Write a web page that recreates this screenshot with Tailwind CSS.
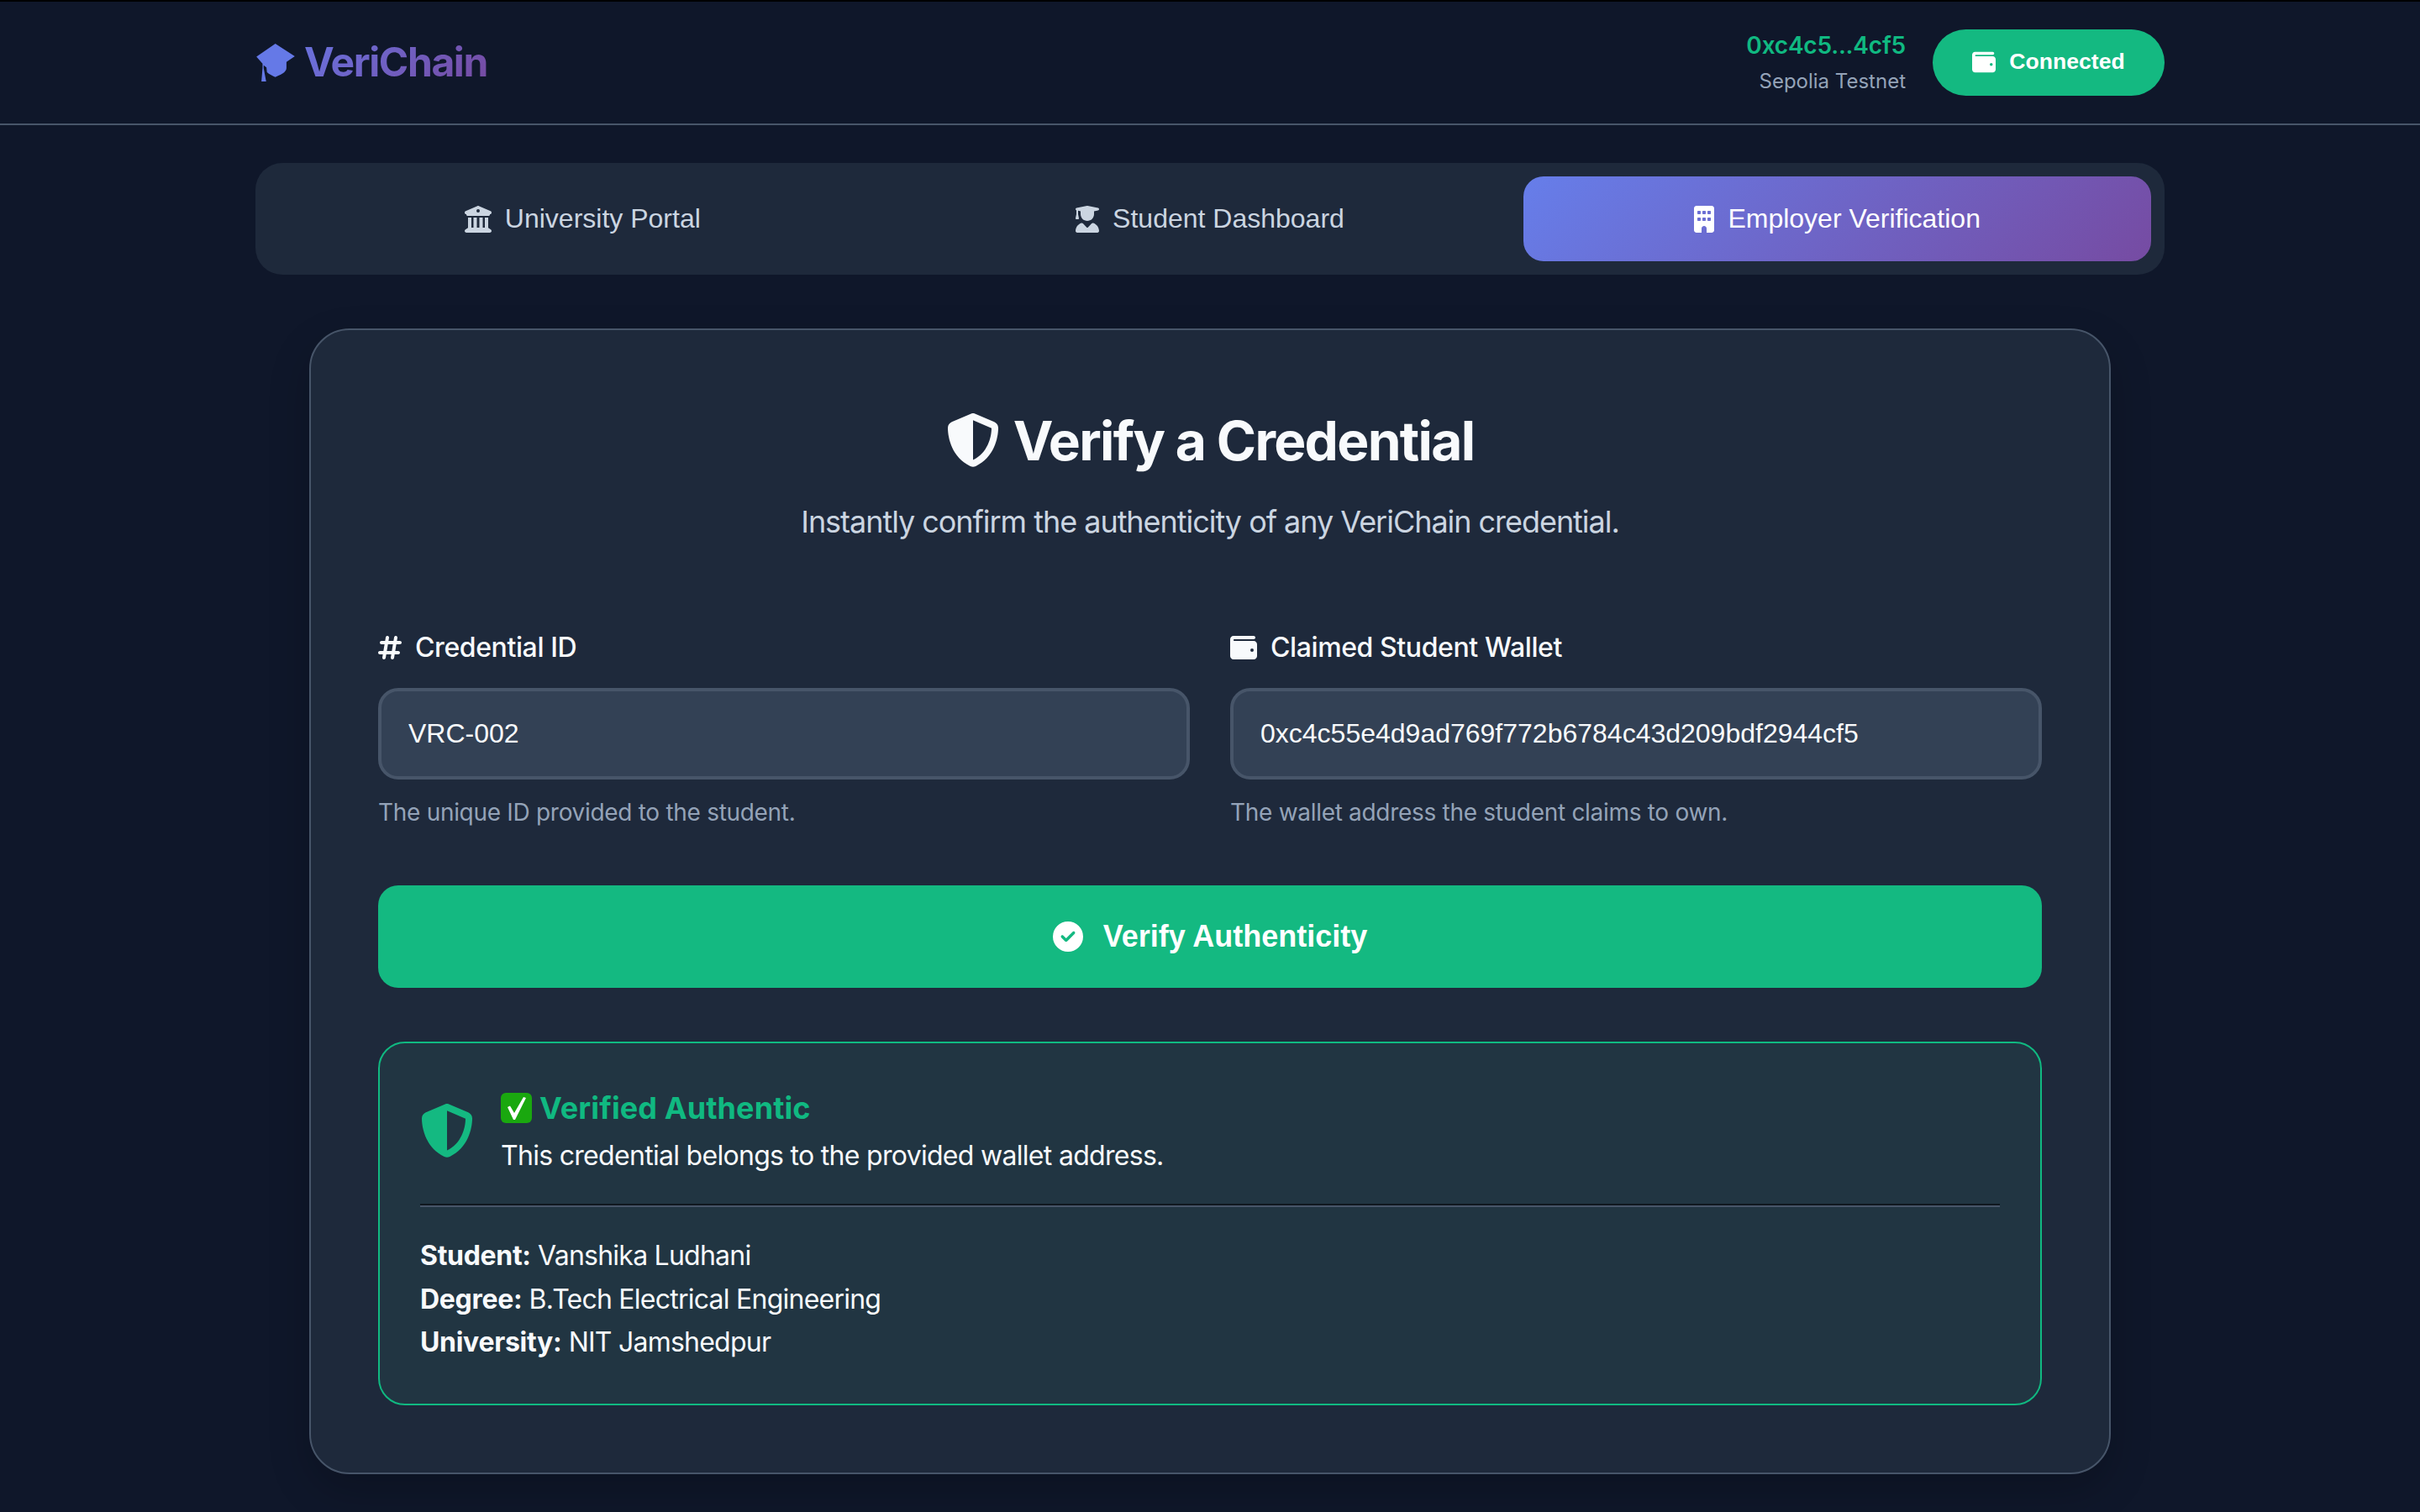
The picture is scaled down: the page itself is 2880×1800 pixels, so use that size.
<!doctype html>
<html lang="en">
  <head>
    <meta charset="utf-8" />
    <script src="https://cdn.jsdelivr.net/npm/@tailwindcss/browser@4"></script>
    <title>VeriChain</title>
  </head>
  <body class="min-h-[1800px] bg-[#0f172a] font-['Inter',sans-serif] text-[#f8fafc]">
    <header class="h-[149px] border-t-2 border-b-2 border-t-black border-b-[#475569] bg-[#0f172a]">
      <div class="mx-auto flex h-full w-[2272px] items-center justify-between pb-[1px]">
        <div class="flex items-center gap-[11px] pl-[1px]">
          <svg class="h-[45px] w-[46px]" viewBox="0 0 138 136" fill="#6579e7">
            <path d="M68 0 138 45 108 66V88C108 104 84 114 68 120 60 117 45 110 38 103L36 85 26 78V88L35 136H18L22 88V72L0 47Z" />
          </svg>
          <span class="bg-[linear-gradient(135deg,#6a72de,#764ba2)] bg-clip-text text-[48px] leading-none font-bold tracking-[-1.4px] text-transparent">VeriChain</span>
        </div>
        <div class="flex items-center gap-[32px]">
          <div class="text-right">
            <div class="text-[28px] leading-[40px] font-semibold tracking-[-0.2px] text-[#10b981]">0xc4c5...4cf5</div>
            <div class="mt-[5px] text-[24px] leading-[36px] text-[#94a3b8]">Sepolia Testnet</div>
          </div>
          <button class="flex h-[79px] w-[276px] items-center justify-center gap-[16px] rounded-full bg-[#14b981] font-['Liberation_Sans',sans-serif] text-[26.6px] font-bold text-white">
            <svg class="h-[28px] w-[28px]" viewBox="0 0 512 512" fill="currentColor"><path d="M64 32C28.7 32 0 60.7 0 96V416c0 35.3 28.7 64 64 64H448c35.3 0 64-28.7 64-64V192c0-35.3-28.7-64-64-64H80c-8.8 0-16-7.2-16-16s7.2-16 16-16H448c17.7 0 32-14.3 32-32s-14.3-32-32-32H64zM416 272a32 32 0 1 1 0 64 32 32 0 1 1 0-64z"/></svg>
            Connected
          </button>
        </div>
      </div>
    </header>

    <main class="mx-auto w-[2272px]">
      <nav class="mt-[45px] grid h-[133px] grid-cols-3 rounded-[32px] bg-[#1e293b] p-[16px] font-['Liberation_Sans',sans-serif] text-[32px]">
        <a class="flex items-center justify-center gap-[16px] rounded-[24px] text-[#cbd5e1]">
          <svg class="h-[32px] w-[32px]" viewBox="0 0 512 512" fill="currentColor"><path d="M243.4 2.6l-224 96c-14 6-21.8 21-18.7 35.8S16.8 160 32 160v8c0 13.3 10.7 24 24 24H456c13.3 0 24-10.7 24-24v-8c15.2 0 28.3-10.7 31.3-25.6s-4.8-29.9-18.7-35.8l-224-96c-8-3.4-17.2-3.4-25.2 0zM128 224H64V420.3c-.6 .3-1.2 .7-1.8 1.1l-48 32c-11.7 7.8-17 22.4-12.9 35.9S17.9 512 32 512H480c14.1 0 26.5-9.2 30.6-22.7s-1.1-28.1-12.9-35.9l-48-32c-.6-.4-1.2-.7-1.8-1.1V224H384V416H344V224H280V416H232V224H168V416H128V224zM256 64a32 32 0 1 1 0 64 32 32 0 1 1 0-64z"/></svg>
          <span class="mb-[2px]">University Portal</span>
        </a>
        <a class="flex items-center justify-center gap-[16px] rounded-[24px] text-[#cbd5e1]">
          <svg class="h-[32px] w-[28px]" viewBox="0 0 448 512" fill="currentColor"><path d="M219.3 .5c3.1-.6 6.3-.6 9.4 0l200 40C439.9 42.7 448 52.6 448 64s-8.1 21.3-19.3 23.5L352 102.9V160c0 70.7-57.3 128-128 128s-128-57.3-128-128V102.9L48 93.3v65.1l15.7 78.4c.9 4.7-.3 9.6-3.3 13.3s-7.6 5.9-12.4 5.9H16c-4.8 0-9.3-2.1-12.4-5.9s-4.3-8.6-3.3-13.3L16 158.4V86.6C6.5 83.3 0 74.3 0 64C0 52.6 8.1 42.7 19.3 40.5l200-40zM111.9 327.7c10.5-3.4 21.8 .4 29.4 8.5l71 75.5c6.3 6.7 17 6.7 23.3 0l71-75.5c7.6-8.1 18.9-11.9 29.4-8.5C401 348.6 448 409.4 448 481.3c0 17-13.8 30.7-30.7 30.7H30.7C13.8 512 0 498.2 0 481.3c0-71.9 47-132.7 111.9-153.6z"/></svg>
          <span class="mb-[2px]">Student Dashboard</span>
        </a>
        <a class="flex items-center justify-center gap-[16px] rounded-[24px] bg-[linear-gradient(135deg,#667eea,#764ba2)] text-white">
          <svg class="h-[32px] w-[24px]" viewBox="0 0 384 512" fill="currentColor"><path d="M48 0C21.5 0 0 21.5 0 48V464c0 26.5 21.5 48 48 48h96V432c0-26.5 21.5-48 48-48s48 21.5 48 48v80h96c26.5 0 48-21.5 48-48V48c0-26.5-21.5-48-48-48H48zM64 240c0-8.8 7.2-16 16-16h32c8.8 0 16 7.2 16 16v32c0 8.8-7.2 16-16 16H80c-8.8 0-16-7.2-16-16V240zm112-16h32c8.8 0 16 7.2 16 16v32c0 8.8-7.2 16-16 16H176c-8.8 0-16-7.2-16-16V240c0-8.8 7.2-16 16-16zm80 16c0-8.8 7.2-16 16-16h32c8.8 0 16 7.2 16 16v32c0 8.8-7.2 16-16 16H272c-8.8 0-16-7.2-16-16V240zM80 96h32c8.8 0 16 7.2 16 16v32c0 8.8-7.2 16-16 16H80c-8.8 0-16-7.2-16-16V112c0-8.8 7.2-16 16-16zm80 16c0-8.8 7.2-16 16-16h32c8.8 0 16 7.2 16 16v32c0 8.8-7.2 16-16 16H176c-8.8 0-16-7.2-16-16V112zM272 96h32c8.8 0 16 7.2 16 16v32c0 8.8-7.2 16-16 16H272c-8.8 0-16-7.2-16-16V112c0-8.8 7.2-16 16-16z"/></svg>
          <span class="mb-[2px]">Employer Verification</span>
        </a>
      </nav>

      <section class="mx-auto mt-[64px] w-[2144px] rounded-[48px] border-2 border-[#475569] bg-[#1e293b] p-[80px] shadow-[0_20px_50px_rgba(0,0,0,0.2)]">
        <h1 class="flex h-[102px] items-center justify-center gap-[16px] text-[64px] font-bold tracking-[-1.7px]">
          <svg class="h-[64px] w-[64px]" viewBox="0 0 512 512" fill="currentColor"><path d="M256 0c4.6 0 9.2 1 13.4 2.9L457.7 82.8c22 9.3 38.4 31 38.3 57.2c-.5 99.2-41.3 280.7-213.6 363.2c-16.7 8-36.1 8-52.8 0C57.3 420.7 16.5 239.2 16 140c-.1-26.2 16.3-47.9 38.3-57.2L242.7 2.9C246.8 1 251.4 0 256 0zm0 66.8V444.8C394 378 431.1 230.1 432 141.4L256 66.8l0 0z"/></svg>
          <span class="mt-[2px]">Verify a Credential</span>
        </h1>
        <p class="mt-[17px] text-center text-[36px] leading-[58px] tracking-[-1.04px] text-[#cbd5e1]">Instantly confirm the authenticity of any VeriChain credential.</p>

        <div class="mt-[95px] grid grid-cols-2 gap-[48px]">
          <div>
            <label class="flex h-[51px] items-center gap-[16px] text-[32px] font-medium tracking-[-0.4px]">
              <svg class="h-[32px] w-[28px]" viewBox="0 0 448 512" fill="currentColor"><path d="M181.3 32.4c17.4 2.9 29.2 19.4 26.3 36.8L197.8 128h95.1l11.5-69.3c2.9-17.4 19.4-29.2 36.8-26.3s29.2 19.4 26.3 36.8L357.8 128H416c17.7 0 32 14.3 32 32s-14.3 32-32 32H347.1L325.8 320H384c17.7 0 32 14.3 32 32s-14.3 32-32 32H315.1l-11.5 69.3c-2.9 17.4-19.4 29.2-36.8 26.3s-29.2-19.4-26.3-36.8l9.8-58.7H155.1l-11.5 69.3c-2.9 17.4-19.4 29.2-36.8 26.3s-29.2-19.4-26.3-36.8L90.2 384H32c-17.7 0-32-14.3-32-32s14.3-32 32-32h68.9l21.3-128H64c-17.7 0-32-14.3-32-32s14.3-32 32-32h68.9l11.5-69.3c2.9-17.4 19.4-29.2 36.8-26.3zM187.1 192L165.8 320h95.1l21.3-128H187.1z"/></svg>
              Credential ID
            </label>
            <input class="mt-[23px] block h-[109px] w-full rounded-[24px] border-4 border-[#475569] bg-[#334155] px-[32px] font-['Liberation_Sans',sans-serif] text-[32px] text-[#f8fafc]" value="VRC-002" readonly />
            <p class="mt-[17px] text-[28px] leading-[45px] tracking-[-0.3px] text-[#94a3b8]">The unique ID provided to the student.</p>
          </div>
          <div>
            <label class="flex h-[51px] items-center gap-[16px] text-[32px] font-medium tracking-[-0.4px]">
              <svg class="h-[32px] w-[32px]" viewBox="0 0 512 512" fill="currentColor"><path d="M64 32C28.7 32 0 60.7 0 96V416c0 35.3 28.7 64 64 64H448c35.3 0 64-28.7 64-64V192c0-35.3-28.7-64-64-64H80c-8.8 0-16-7.2-16-16s7.2-16 16-16H448c17.7 0 32-14.3 32-32s-14.3-32-32-32H64zM416 272a32 32 0 1 1 0 64 32 32 0 1 1 0-64z"/></svg>
              Claimed Student Wallet
            </label>
            <input class="mt-[23px] block h-[109px] w-full rounded-[24px] border-4 border-[#475569] bg-[#334155] px-[32px] font-['Liberation_Sans',sans-serif] text-[32px] text-[#f8fafc]" value="0xc4c55e4d9ad769f772b6784c43d209bdf2944cf5" readonly />
            <p class="mt-[17px] text-[28px] leading-[45px] tracking-[-0.3px] text-[#94a3b8]">The wallet address the student claims to own.</p>
          </div>
        </div>

        <button class="mt-[64px] flex h-[122px] w-full items-center justify-center gap-[24px] rounded-[24px] bg-[#14b981] font-['Liberation_Sans',sans-serif] text-[36px] font-bold text-white">
          <svg class="h-[36px] w-[36px]" viewBox="0 0 512 512" fill="currentColor"><path d="M256 512A256 256 0 1 0 256 0a256 256 0 1 0 0 512zM369 209L241 337c-9.4 9.4-24.6 9.4-33.9 0l-64-64c-9.4-9.4-9.4-24.6 0-33.9s24.6-9.4 33.9 0l47 47L335 175c9.4-9.4 24.6-9.4 33.9 0s9.4 24.6 0 33.9z"/></svg>
          Verify Authenticity
        </button>

        <div class="mt-[64px] rounded-[32px] border-2 border-[#10b981] bg-[#213542] p-[48px] pb-[47px]">
          <div class="flex items-center gap-[32px]">
            <svg class="h-[64px] w-[64px] text-[#14b981]" viewBox="0 0 512 512" fill="currentColor"><path d="M256 0c4.6 0 9.2 1 13.4 2.9L457.7 82.8c22 9.3 38.4 31 38.3 57.2c-.5 99.2-41.3 280.7-213.6 363.2c-16.7 8-36.1 8-52.8 0C57.3 420.7 16.5 239.2 16 140c-.1-26.2 16.3-47.9 38.3-57.2L242.7 2.9C246.8 1 251.4 0 256 0zm0 66.8V444.8C394 378 431.1 230.1 432 141.4L256 66.8l0 0z"/></svg>
            <div>
              <div class="flex h-[58px] items-center gap-[9px] text-[36px] font-bold tracking-[0.1px] text-[#10b981]">
                <svg class="h-[36px] w-[37px]" viewBox="0 0 37 36">
                  <rect width="37" height="36" rx="6" fill="#1aa80f" />
                  <path d="M8 17 11 15.5 16 24 27 5 30 6 17 32 15 32Z" fill="white" />
                </svg>
                Verified Authentic
              </div>
              <p class="mt-[2px] text-[32px] leading-[51px] tracking-[-0.7px]">This credential belongs to the provided wallet address.</p>
            </div>
          </div>
          <hr class="mt-[32px] h-[4px] border-t-2 border-b-2 border-t-[#10171f] border-b-[#475569]" />
          <div class="mt-[32px] text-[32px] leading-[51.6px] tracking-[-0.76px]">
            <p><strong class="font-bold tracking-[-0.3px]">Student:</strong> Vanshika Ludhani</p>
            <p><strong class="font-bold tracking-[-0.3px]">Degree:</strong> B.Tech Electrical Engineering</p>
            <p><strong class="font-bold tracking-[-0.3px]">University:</strong> NIT Jamshedpur</p>
          </div>
        </div>
      </section>
    </main>
  </body>
</html>
